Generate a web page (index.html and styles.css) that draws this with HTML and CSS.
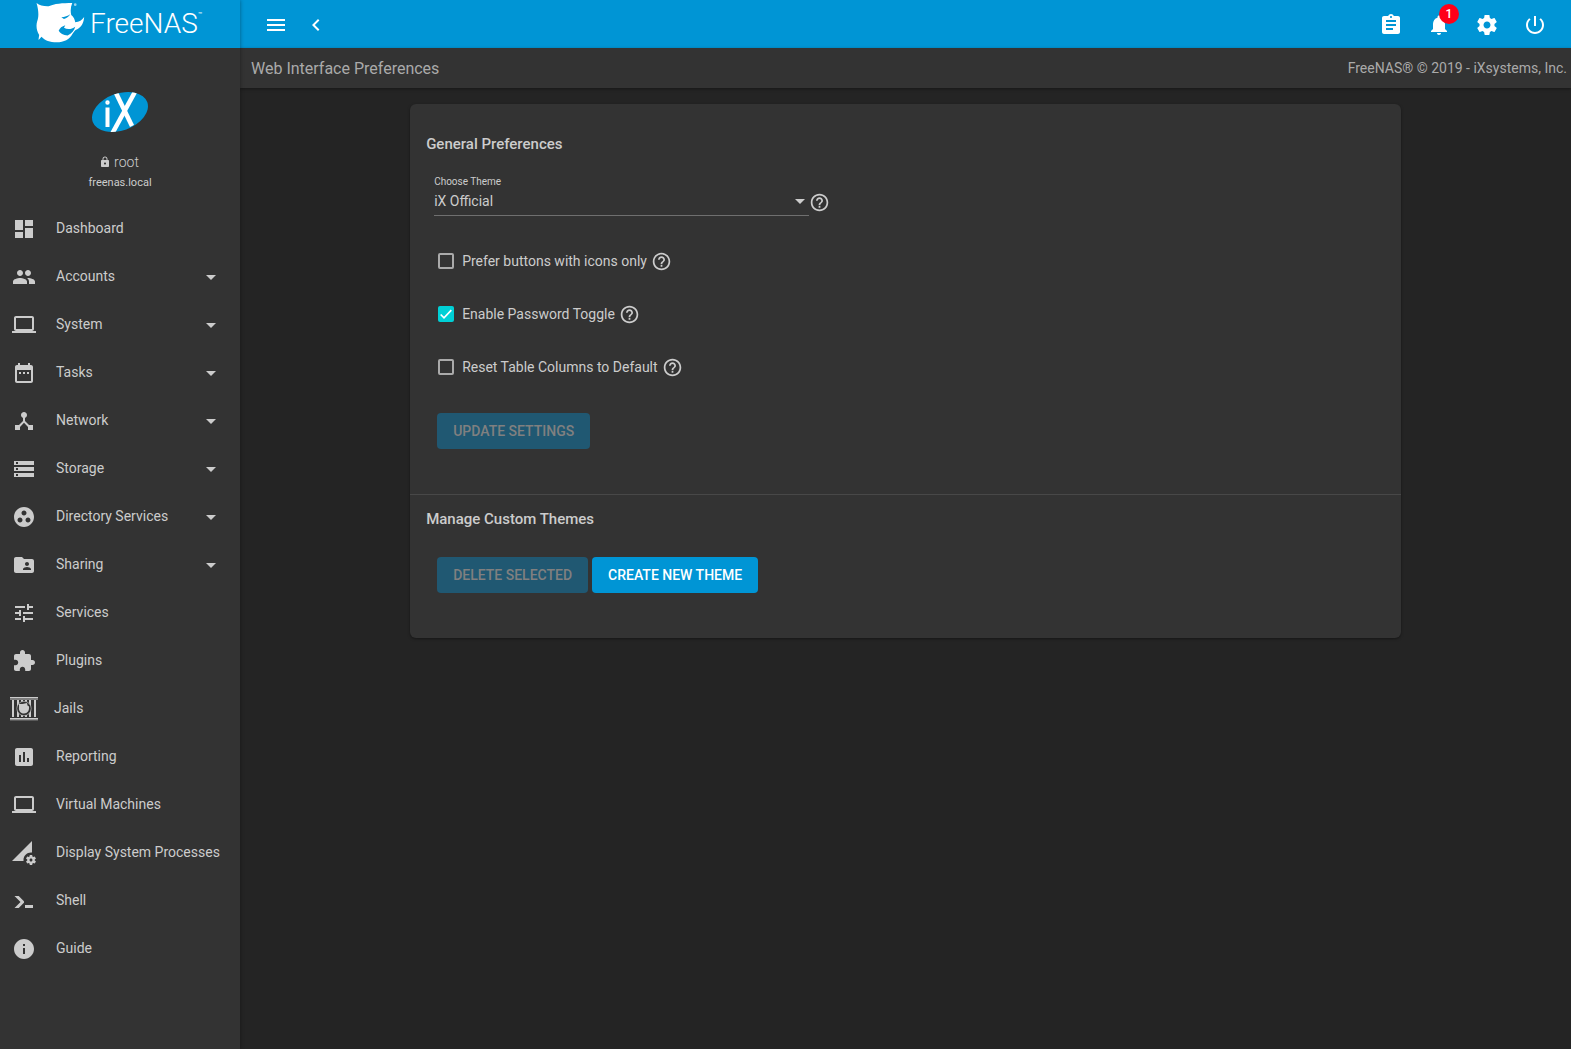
FILE: index.html
```html
<!DOCTYPE html>
<html lang="en">
<head>
<meta charset="utf-8">
<title>FreeNAS - Web Interface Preferences</title>
<link rel="stylesheet" href="styles.css">
</head>
<body>
<svg class="sprite" aria-hidden="true">
  <symbol id="help" viewBox="0 0 24 24"><path d="M11 18h2v-2h-2v2zm1-16C6.480 2 2 6.480 2 12s4.480 10 10 10 10-4.480 10-10S17.520 2 12 2zm0 18c-4.410 0-8-3.590-8-8s3.590-8 8-8 8 3.590 8 8-3.590 8-8 8zm0-14c-2.210 0-4 1.790-4 4h2c0-1.100.9-2 2-2s2 .9 2 2c0 2-3 1.750-3 5h2c0-2.250 3-2.500 3-5 0-2.210-1.790-4-4-4z"/></symbol>
  <symbol id="arrow" viewBox="0 0 24 24"><path d="M7 10l5 5 5-5z"/></symbol>
  <symbol id="laptop" viewBox="0 0 24 24"><path d="M20 18c1.100 0 1.990-.9 1.990-2L22 5c0-1.100-.9-2-2-2H4c-1.100 0-2 .9-2 2v11c0 1.100.9 2 2 2H0v2h24v-2h-4zM4 5h16v11H4V5z"/></symbol>
</svg>
<div class="app">
  <aside class="sidebar">
    <a class="brand" href="#" aria-label="FreeNAS home">
      <svg class="shark" viewBox="0 0 150 130" aria-hidden="true">
        <path d="M1 0C10 7 24 11 38 10C54 2 80 0 109 0C104 12 103 24 106 36C113 42 117 49 118 58C130 57 139 51 145 42C144 58 138 72 124 79C116 82 114 87 110 93C101 110 84 119 62 119C42 119 26 113 16 102L8 111L7 110L9 97C1 84-1 68 3 55C8 42 8 24 1 0Z"/>
        <path class="cut" d="M68 84C71 75 78 70 88 67L84 75C94 81 107 80 118 72C115 84 108 92 95 98C82 98 72 92 68 84ZM76 43C86 43 95 39 103 34C98 42 92 46 84 48Z"/>
        <circle cx="118" cy="5" r="4" opacity=".6"/>
      </svg>
      <span class="wordmark">FreeNAS</span><span class="tm">™</span>
    </a>
    <div class="profile">
      <svg class="ix" viewBox="0 0 58 44" role="img" aria-label="iXsystems">
        <defs><clipPath id="oval"><ellipse cx="29" cy="22" rx="29" ry="18.500" transform="rotate(-20 29 22)"/></clipPath></defs>
        <ellipse cx="29" cy="22" rx="29" ry="18.500" transform="rotate(-20 29 22)" fill="#0095d5"/>
        <g clip-path="url(#oval)" fill="none" stroke="#fff">
          <path d="M16.500 17.500V37" stroke-width="4"/><circle cx="16.500" cy="12.500" r="1.200" stroke-width="2"/>
          <path d="M25 3L41 36" stroke-width="4.500"/><path d="M45 0L21 44" stroke-width="4.500"/>
        </g>
      </svg>
      <div class="user"><svg class="lock" viewBox="0 0 24 24" aria-hidden="true"><path d="M18 8h-1V6c0-2.760-2.240-5-5-5S7 3.240 7 6v2H6c-1.100 0-2 .9-2 2v10c0 1.100.9 2 2 2h12c1.100 0 2-.9 2-2V10c0-1.100-.9-2-2-2zm-6 9c-1.100 0-2-.9-2-2s.9-2 2-2 2 .9 2 2-.9 2-2 2zm3.100-9H8.900V6c0-1.710 1.390-3.100 3.100-3.100 1.710 0 3.100 1.390 3.100 3.100v2z"/></svg><span>root</span></div>
      <div class="host">freenas.local</div>
    </div>
    <nav class="menu">
      <a class="item" href="#"><svg viewBox="0 0 24 24"><path d="M3 13h8V3H3v10zm0 8h8v-6H3v6zm10 0h8V11h-8v10zm0-18v6h8V3h-8z"/></svg><span class="label">Dashboard</span></a>
      <button class="item" type="button"><svg viewBox="0 0 24 24"><path d="M16 11c1.660 0 2.990-1.340 2.990-3S17.660 5 16 5c-1.660 0-3 1.340-3 3s1.340 3 3 3zm-8 0c1.660 0 2.990-1.340 2.990-3S9.660 5 8 5C6.340 5 5 6.340 5 8s1.340 3 3 3zm0 2c-2.330 0-7 1.170-7 3.500V19h14v-2.500c0-2.330-4.670-3.500-7-3.500zm8 0c-.29 0-.62.020-.97.050 1.160.84 1.970 1.970 1.970 3.450V19h6v-2.500c0-2.330-4.670-3.500-7-3.500z"/></svg><span class="label">Accounts</span><svg><use href="#arrow"/></svg></button>
      <button class="item" type="button"><svg><use href="#laptop"/></svg><span class="label">System</span><svg><use href="#arrow"/></svg></button>
      <button class="item" type="button"><svg viewBox="0 0 24 24"><path d="M9 11H7v2h2v-2zm4 0h-2v2h2v-2zm4 0h-2v2h2v-2zm2-7h-1V2h-2v2H8V2H6v2H5c-1.110 0-1.990.9-1.990 2L3 20c0 1.100.89 2 2 2h14c1.100 0 2-.9 2-2V6c0-1.100-.9-2-2-2zm0 16H5V9h14v11z"/></svg><span class="label">Tasks</span><svg><use href="#arrow"/></svg></button>
      <button class="item" type="button"><svg viewBox="0 0 24 24"><path d="M17 16l-4-4V8.820C14.160 8.400 15 7.300 15 6c0-1.660-1.340-3-3-3S9 4.340 9 6c0 1.300.84 2.400 2 2.820V12l-4 4H3v5h5v-3.050l4-4.200 4 4.200V21h5v-5h-4z"/></svg><span class="label">Network</span><svg><use href="#arrow"/></svg></button>
      <button class="item" type="button"><svg viewBox="0 0 24 24"><path d="M2 20h20v-4H2v4zm2-3h2v2H4v-2zM2 4v4h20V4H2zm4 3H4V5h2v2zm-4 7h20v-4H2v4zm2-3h2v2H4v-2z"/></svg><span class="label">Storage</span><svg><use href="#arrow"/></svg></button>
      <button class="item" type="button"><svg viewBox="0 0 24 24"><path d="M12 2C6.480 2 2 6.480 2 12s4.480 10 10 10 10-4.480 10-10S17.520 2 12 2zM8 17.500c-1.380 0-2.500-1.120-2.500-2.500s1.120-2.500 2.500-2.500 2.500 1.120 2.500 2.500-1.120 2.500-2.500 2.500zM9.500 8c0-1.380 1.120-2.500 2.500-2.500s2.500 1.120 2.500 2.500-1.120 2.500-2.500 2.500S9.500 9.380 9.500 8zm6.500 9.500c-1.380 0-2.500-1.120-2.500-2.500s1.120-2.500 2.500-2.500 2.500 1.120 2.500 2.500-1.120 2.500-2.500 2.500z"/></svg><span class="label">Directory Services</span><svg><use href="#arrow"/></svg></button>
      <button class="item" type="button"><svg viewBox="0 0 24 24"><path d="M20 6h-8l-2-2H4c-1.100 0-1.990.9-1.990 2L2 18c0 1.100.9 2 2 2h16c1.100 0 2-.9 2-2V8c0-1.100-.9-2-2-2zm-5 3c1.100 0 2 .9 2 2s-.9 2-2 2-2-.9-2-2 .9-2 2-2zm4 8h-8v-1c0-1.330 2.670-2 4-2s4 .67 4 2v1z"/></svg><span class="label">Sharing</span><svg><use href="#arrow"/></svg></button>
      <a class="item" href="#"><svg viewBox="0 0 24 24"><path d="M3 17v2h6v-2H3zM3 5v2h10V5H3zm10 16v-2h8v-2h-8v-2h-2v6h2zM7 9v2H3v2h4v2h2V9H7zm14 4v-2H11v2h10zm-6-4h2V7h4V5h-4V3h-2v6z"/></svg><span class="label">Services</span></a>
      <a class="item" href="#"><svg viewBox="0 0 24 24"><path d="M20.500 11H19V7c0-1.100-.9-2-2-2h-4V3.500C13 2.120 11.880 1 10.500 1S8 2.120 8 3.500V5H4c-1.100 0-1.990.9-1.990 2v3.800H3.500c1.490 0 2.700 1.210 2.700 2.700s-1.210 2.700-2.700 2.700H2V20c0 1.100.9 2 2 2h3.800v-1.500c0-1.490 1.210-2.700 2.700-2.700 1.490 0 2.700 1.210 2.700 2.700V22H17c1.100 0 2-.9 2-2v-4h1.500c1.380 0 2.500-1.120 2.500-2.500S21.880 11 20.500 11z"/></svg><span class="label">Plugins</span></a>
      <a class="item item-jails" href="#"><svg viewBox="0 0 28 24"><path d="M0 0h28v1.500H0zM0 21h28v1.500H0zM2 3h2v17H2zM7 3h2v17H7zM19 3h2v17h-2zM24 3h2v17h-2zM11 3h2v17h-2zM15 3h2v17h-2z"/><path d="M0 2h28v1H0zM0 22.500h28v1H0z" opacity=".5"/><circle cx="14" cy="11.500" r="7.200" fill="#333" stroke="#ccc" stroke-width=".6"/><path d="M9 7l3.500 0L17 6l.5 2.500 1.500 1c.5 4-1.500 7-5 7S8.500 14 9 10z"/></svg><span class="label">Jails</span></a>
      <a class="item" href="#"><svg viewBox="0 0 24 24"><path d="M19 3H5c-1.100 0-2 .9-2 2v14c0 1.100.9 2 2 2h14c1.100 0 2-.9 2-2V5c0-1.100-.9-2-2-2zM9 17H7v-7h2v7zm4 0h-2V7h2v10zm4 0h-2v-4h2v4z"/></svg><span class="label">Reporting</span></a>
      <a class="item" href="#"><svg><use href="#laptop"/></svg><span class="label">Virtual Machines</span></a>
      <a class="item" href="#"><svg viewBox="0 0 24 24"><path d="M18.990 11.500c.34 0 .67.030 1 .070L20 0 0 20h11.560c-.04-.33-.07-.66-.07-1 0-4.140 3.360-7.500 7.500-7.500zm3.710 7.990c.02-.16.04-.32.04-.49 0-.17-.01-.33-.04-.49l1.060-.83c.09-.08.12-.21.06-.32l-1-1.730c-.06-.11-.19-.15-.31-.11l-1.240.5c-.26-.2-.54-.37-.85-.49l-.19-1.320c-.01-.12-.12-.21-.24-.21h-2c-.12 0-.23.090-.25.210l-.19 1.320c-.3.130-.59.290-.85.490l-1.240-.5c-.11-.04-.24 0-.31.110l-1 1.730c-.06.110-.04.240.060.320l1.060.83c-.02.160-.03.320-.03.490 0 .17.010.33.030.49l-1.060.83c-.09.080-.12.210-.06.320l1 1.730c.06.110.19.150.31.110l1.240-.5c.26.200.54.370.85.490l.19 1.320c.02.120.12.210.25.210h2c.12 0 .23-.09.25-.21l.19-1.320c.3-.13.590-.29.840-.49l1.250.5c.11.040.24 0 .31-.11l1-1.730c.06-.11.030-.24-.06-.32l-1.070-.83zm-3.710 1.010c-.83 0-1.500-.67-1.500-1.500s.67-1.500 1.500-1.500 1.500.67 1.500 1.500-.67 1.500-1.500 1.500z"/></svg><span class="label">Display System Processes</span></a>
      <a class="item" href="#"><svg viewBox="0 0 24 24"><path d="M13 19v-3h8v3h-8zM8.500 13L2.470 7h4.240l4.960 4.950c.58.590.58 1.550 0 2.120L6.740 19H2.500l6-6z"/></svg><span class="label">Shell</span></a>
      <a class="item" href="#"><svg viewBox="0 0 24 24"><path d="M12 2C6.480 2 2 6.480 2 12s4.480 10 10 10 10-4.480 10-10S17.520 2 12 2zm1 15h-2v-6h2v6zm0-8h-2V7h2v2z"/></svg><span class="label">Guide</span></a>
    </nav>
  </aside>
  <div class="main">
    <header class="topbar">
      <div class="tools tools-left">
        <button class="tool" type="button" aria-label="Toggle menu"><svg viewBox="0 0 24 24"><path d="M3 18h18v-2H3v2zm0-5h18v-2H3v2zm0-7v2h18V6H3z"/></svg></button>
        <button class="tool" type="button" aria-label="Collapse menu"><svg viewBox="0 0 24 24"><path d="M15.410 7.410L14 6l-6 6 6 6 1.410-1.410L10.830 12z"/></svg></button>
      </div>
      <div class="tools tools-right">
        <button class="tool" type="button" aria-label="Task manager"><svg viewBox="0 0 24 24"><path d="M19 3h-4.180C14.400 1.840 13.300 1 12 1c-1.300 0-2.400.84-2.820 2H5c-1.100 0-2 .9-2 2v14c0 1.100.9 2 2 2h14c1.100 0 2-.9 2-2V5c0-1.100-.9-2-2-2zm-7 0c.55 0 1 .45 1 1s-.45 1-1 1-1-.45-1-1 .45-1 1-1zm2 14H7v-2h7v2zm3-4H7v-2h10v2zm0-4H7V7h10v2z"/></svg></button>
        <button class="tool" type="button" aria-label="Notifications"><svg viewBox="0 0 24 24"><path d="M12 22c1.100 0 2-.9 2-2h-4c0 1.100.89 2 2 2zm6-6v-5c0-3.070-1.640-5.640-4.500-6.320V4c0-.83-.67-1.500-1.500-1.500s-1.500.67-1.500 1.500v.68C7.630 5.360 6 7.920 6 11v5l-2 2v1h16v-1l-2-2z"/></svg><span class="badge">1</span></button>
        <button class="tool" type="button" aria-label="Settings"><svg viewBox="0 0 24 24"><path d="M19.430 12.980c.04-.32.070-.64.070-.98s-.03-.66-.07-.98l2.110-1.650c.19-.15.240-.42.120-.64l-2-3.460c-.12-.22-.39-.3-.61-.22l-2.490 1c-.52-.4-1.080-.73-1.690-.98l-.38-2.650C14.460 2.180 14.250 2 14 2h-4c-.25 0-.46.180-.49.420l-.38 2.650c-.61.250-1.170.59-1.690.98l-2.490-1c-.23-.09-.49 0-.61.220l-2 3.460c-.13.220-.07.490.12.640l2.110 1.650c-.04.320-.07.650-.07.980s.03.660.070.980l-2.110 1.650c-.19.150-.24.420-.12.640l2 3.460c.12.220.39.300.61.220l2.490-1c.52.400 1.080.73 1.690.98l.38 2.650c.03.240.24.420.49.420h4c.25 0 .46-.18.490-.42l.38-2.650c.61-.25 1.170-.59 1.690-.98l2.490 1c.23.090.49 0 .61-.22l2-3.460c.12-.22.070-.49-.12-.64l-2.110-1.650zM12 15.500c-1.930 0-3.500-1.570-3.500-3.500s1.570-3.500 3.500-3.500 3.500 1.570 3.500 3.500-1.570 3.500-3.500 3.500z"/></svg></button>
        <button class="tool" type="button" aria-label="Power"><svg viewBox="0 0 24 24"><path d="M13 3h-2v10h2V3zm4.830 2.170l-1.420 1.420C17.990 7.860 19 9.810 19 12c0 3.870-3.130 7-7 7s-7-3.130-7-7c0-2.190 1.010-4.140 2.580-5.420L6.170 5.170C4.230 6.820 3 9.260 3 12c0 4.970 4.030 9 9 9s9-4.030 9-9c0-2.740-1.230-5.180-3.170-6.830z"/></svg></button>
      </div>
    </header>
    <div class="crumbs"><h1 class="page-title">Web Interface Preferences</h1><span class="copyright">FreeNAS® © 2019 - iXsystems, Inc.</span></div>
    <main class="content">
      <div class="card">
        <form class="section general">
          <h2 class="heading">General Preferences</h2>
          <div class="field">
            <div class="field-box">
              <label class="field-label" for="theme">Choose Theme</label>
              <div class="select-wrap"><select class="select" id="theme"><option>iX Official</option></select><svg class="select-arrow" aria-hidden="true"><use href="#arrow"/></svg></div>
            </div>
            <svg class="help"><use href="#help"/></svg>
          </div>
          <div class="checks">
            <div class="check"><input class="box" type="checkbox" id="icons"><label for="icons">Prefer buttons with icons only</label><svg class="help"><use href="#help"/></svg></div>
            <div class="check"><input class="box" type="checkbox" id="pwd" checked><label for="pwd">Enable Password Toggle</label><svg class="help"><use href="#help"/></svg></div>
            <div class="check"><input class="box" type="checkbox" id="cols"><label for="cols">Reset Table Columns to Default</label><svg class="help"><use href="#help"/></svg></div>
          </div>
          <div class="actions actions-update"><button class="btn" type="submit" disabled>UPDATE SETTINGS</button></div>
        </form>
        <section class="section themes">
          <h2 class="heading">Manage Custom Themes</h2>
          <div class="actions"><button class="btn" type="button" disabled>DELETE SELECTED</button><button class="btn" type="button">CREATE NEW THEME</button></div>
        </section>
      </div>
    </main>
  </div>
</div>
</body>
</html>
```
FILE: styles.css
```css
* { box-sizing: border-box; }

body {
  margin: 0;
  background: #242424;
  color: #ccc;
  font: 14px/20px Roboto, "Liberation Sans", sans-serif;
}

svg { fill: currentColor; }
button, select, input { font: inherit; color: inherit; margin: 0; }
button { border: 0; padding: 0; background: none; cursor: pointer; }
a { color: inherit; text-decoration: none; }
.sprite { position: absolute; width: 0; height: 0; }

.app { display: flex; min-height: 100vh; }

/* Sidebar */
.sidebar {
  flex: 0 0 240px;
  background: #333;
  box-shadow: 0 0 4px rgba(0, 0, 0, .4);
  z-index: 1;
}

.brand {
  display: flex;
  height: 48px;
  padding: 3px 0 0 36px;
  background: #0095d5;
  color: #fff;
}
.shark { flex: none; width: 50px; height: 43px; }
.wordmark { margin-left: 4px; font-size: 28px; font-weight: 300; line-height: 42px; }
.cut { fill: #0095d5; }
.tm { margin-top: 8px; font-size: 7px; line-height: 8px; }

.profile {
  display: flex;
  flex-direction: column;
  align-items: center;
  height: 157px;
  padding-top: 42px;
}
.ix { width: 58px; height: 44px; }
.user {
  display: flex;
  align-items: center;
  gap: 3px;
  margin-top: 18px;
  padding-right: 2px;
  font-weight: 300;
  line-height: 20px;
}
.lock { width: 12px; height: 12px; }
.host { font-size: 11px; line-height: 22px; }

.item {
  display: flex;
  align-items: center;
  gap: 20px;
  width: 100%;
  height: 48px;
  padding: 0 17px 0 12px;
  text-align: left;
}
.item svg { flex: none; width: 24px; height: 24px; }
.label { flex: 1; padding-bottom: 2px; white-space: nowrap; }
.item-jails { gap: 16px; padding-left: 10px; }
.item-jails svg { width: 28px; }

/* Top bar */
.main { flex: 1; min-width: 0; }
.topbar {
  display: flex;
  justify-content: space-between;
  height: 48px;
  padding: 2px 24px 0;
  background: #0095d5;
  color: #fff;
}
.tools { display: flex; align-items: center; }
.tools-left { gap: 16px; }
.tools-right { gap: 24px; }
.tool { position: relative; width: 24px; height: 24px; }
.tool svg { display: block; width: 24px; height: 24px; }
.badge {
  position: absolute;
  top: -9px;
  right: -8px;
  width: 20px;
  height: 20px;
  border-radius: 50%;
  background: #ff0018;
  font-size: 12px;
  font-weight: 500;
  line-height: 20px;
  text-align: center;
}

.crumbs {
  display: flex;
  align-items: center;
  justify-content: space-between;
  height: 40px;
  padding: 0 4px 0 11px;
  background: #333;
  color: #aaa;
  box-shadow: 0 1px 3px rgba(0, 0, 0, .4);
}
.page-title { margin: 0; padding-top: 2px; font-size: 16px; font-weight: 400; }

/* Preferences card */
.content { padding: 16px 5px; }
.card {
  width: 75%;
  margin: 0 auto;
  border-radius: 6px;
  background: #333;
  box-shadow: 0 1px 3px rgba(0, 0, 0, .4);
}
.section { padding: 0 16px; }
.general { padding-top: 30px; padding-bottom: 45px; border-bottom: 1px solid #484848; }
.themes { padding-top: 14px; padding-bottom: 45px; }
.heading { margin: 0; font-size: 15px; font-weight: 500; line-height: 20px; }

.field { display: flex; align-items: flex-end; padding: 19px 0 0 8px; }
.field-box { width: 375px; border-bottom: 1px solid #6f6f6f; }
.field-label { display: block; font-size: 10px; line-height: 18px; }
.select-wrap { position: relative; }
.select {
  display: block;
  width: 100%;
  height: 24px;
  padding: 0 24px 4px 0;
  border: 0;
  background: transparent;
  appearance: none;
}
.select-arrow {
  position: absolute;
  top: -2px;
  right: -3px;
  width: 24px;
  height: 24px;
  pointer-events: none;
}
.help { flex: none; width: 21px; height: 21px; }
.field .help { margin-bottom: 3px; }

.checks { display: grid; gap: 29px; padding: 33px 0 0 12px; }
.check { display: flex; align-items: center; height: 24px; }
.check label { margin: 0 4px 0 8px; }
.box {
  width: 16px;
  height: 16px;
  border: 2px solid #aaa;
  border-radius: 2px;
  appearance: none;
}
.box:checked {
  border: 0;
  background: #00d0d6 url("data:image/svg+xml,%3Csvg xmlns='http://www.w3.org/2000/svg' viewBox='0 0 24 24'%3E%3Cpath fill='none' stroke='%23fff' stroke-width='2.500' d='M4 12.700L9 17.700L20 6.300'/%3E%3C/svg%3E");
}

.actions { display: flex; gap: 4px; padding: 28px 0 0 11px; }
.actions-update { padding-top: 34px; }
.btn {
  height: 36px;
  padding: 0 16px;
  border-radius: 4px;
  background: #0095d5;
  color: #fff;
  font-weight: 500;
}
.btn:disabled { background: #205872; color: #808080; cursor: default; }
```
